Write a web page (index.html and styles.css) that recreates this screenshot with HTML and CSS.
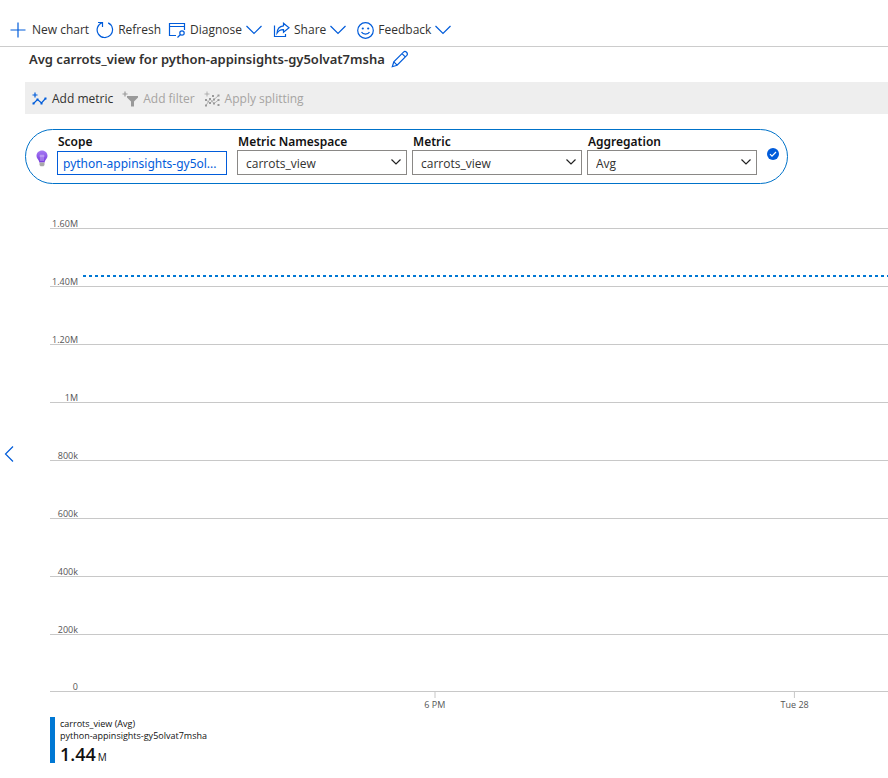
FILE: index.html
```html
<!DOCTYPE html>
<html lang="en">
<head>
<meta charset="utf-8">
<title>Metrics</title>
<link rel="stylesheet" href="styles.css">
</head>
<body>
<header class="toolbar">
  <button class="command new"><svg width="16" height="16" viewBox="0 0 16 16"><path d="M8 0.500v15M0.500 8h15"/></svg>New chart</button>
  <button class="command refresh"><svg width="18" height="18" viewBox="0 0 18 18"><path d="M6.500 1.500A7.700 7.700 0 1 0 12.200 1.900M2 1.500H6.500V6"/></svg>Refresh</button>
  <button class="command menu"><svg width="18" height="16" viewBox="0 0 18 16"><path d="M8 13.500H1.500V1.500H16.500V8M1.500 4.500H16.500M9.500 15.500L12.500 12.500"/><circle cx="14" cy="11" r="2.200"/></svg>Diagnose<svg class="chevron" width="16" height="10" viewBox="0 0 16 10"><path d="M0.500 1L8 8.500L15.500 1"/></svg></button>
  <button class="command menu"><svg width="17" height="16" viewBox="0 0 17 16"><path d="M1.500 3.500V14.500H12.500V12M10.500 1.200L16 5.700L10.500 10.200V7.700C7.500 7.500 5.500 8.800 4 11.200C4.200 7 6.500 4.200 10.500 3.800Z"/></svg>Share<svg class="chevron" width="16" height="10" viewBox="0 0 16 10"><path d="M0.500 1L8 8.500L15.500 1"/></svg></button>
  <button class="command menu"><svg width="17" height="17" viewBox="0 0 17 17"><circle cx="8.500" cy="8.500" r="7.800"/><path d="M4.500 10C6 12.800 11 12.800 12.500 10"/><circle class="solid" cx="5.800" cy="6.500" r="1.100"/><circle class="solid" cx="11.200" cy="6.500" r="1.100"/></svg>Feedback<svg class="chevron" width="16" height="10" viewBox="0 0 16 10"><path d="M0.500 1L8 8.500L15.500 1"/></svg></button>
</header>

<div class="title-row">
  <h1>Avg carrots_view for python-appinsights-gy5olvat7msha</h1>
  <button class="edit" aria-label="Edit title"><svg width="18" height="18" viewBox="0 0 18 18"><path d="M1.300 16.700L2.800 11.800L12.500 2.100C14.500 0.300 17.500 3.300 15.800 5.400L6.100 15.200ZM2.800 11.800L6.100 15.200M11 3.600L14.300 6.900"/></svg></button>
</div>

<nav class="actions">
  <button class="action"><svg class="blue" width="15" height="14" viewBox="0 0 15 14"><path d="M3 0.500V5.500M0.500 3H5.500M1.500 11.500L5.500 7.500L9.500 11L13.500 6.500"/><path class="dots" d="M0.500 10.500h2v2h-2zM4.500 6.500h2v2h-2zM8.500 10.500h2v2h-2zM12.500 5.500h2v2h-2z"/></svg>Add metric</button>
  <button class="action" disabled><svg width="16" height="16" viewBox="0 0 16 16"><path d="M3 0.500V5.500M0.500 3H5.500"/><path class="dots" d="M5 5H16V6.500L12 10.500V15.500H9V10.500L5 6.500Z"/></svg>Add filter</button>
  <button class="action" disabled><svg class="fine" width="16" height="16" viewBox="0 0 16 16"><path d="M3 0.500V5.500M0.500 3H5.500M2 9L6 12L10 8.500L14.500 4.500M2 14.500L6 8L10 12.500L14.500 9"/><path class="dots" d="M1 8h2v2h-2zM5 11h2v2h-2zM5 7h2v2h-2zM9 7.500h2v2h-2zM13.500 3.500h2v2h-2zM1 13.500h2v2h-2zM9 11.500h2v2h-2zM13.500 8h2v2h-2zM13.500 13h2v2h-2zM8 4h2v2h-2z"/></svg>Apply splitting</button>
</nav>

<main class="workspace">
  <aside class="rail"><button aria-label="Expand panel"><svg width="10" height="16" viewBox="0 0 10 16"><path d="M9 0.500L1.500 8L9 15.500"/></svg></button></aside>
  <div class="content">
    <form class="metric">
      <svg class="bulb" width="12" height="17" viewBox="0 0 12 17"><defs><linearGradient id="glow" x1="0" y1="0" x2="0" y2="1"><stop offset="0" stop-color="#a67af4"/><stop offset="1" stop-color="#773adc"/></linearGradient></defs><path fill="url(#glow)" d="M6 0.500C2.800 0.500 0.500 2.800 0.500 5.700C0.500 8.800 3.300 9.500 3.300 12.500H8.700C8.700 9.500 11.500 8.800 11.500 5.700C11.500 2.800 9.200 0.500 6 0.500Z"/><path class="filament" d="M5 11V4.500M7 11V4.500M3.500 6H8.500"/><path fill="#a8a8a8" d="M3.500 12.500h5v2.500l-1 1.200h-3l-1-1.200z"/></svg>
      <div class="field scope"><label for="scope">Scope</label><button type="button" id="scope">python-appinsights-gy5ol...</button></div>
      <div class="field"><label for="ns">Metric Namespace</label><div class="select"><select id="ns"><option>carrots_view</option></select><svg width="10" height="6" viewBox="0 0 10 6"><path d="M0.500 0.500L5 5L9.500 0.500"/></svg></div></div>
      <div class="field"><label for="metric">Metric</label><div class="select"><select id="metric"><option>carrots_view</option></select><svg width="10" height="6" viewBox="0 0 10 6"><path d="M0.500 0.500L5 5L9.500 0.500"/></svg></div></div>
      <div class="field"><label for="agg">Aggregation</label><div class="select"><select id="agg"><option>Avg</option></select><svg width="10" height="6" viewBox="0 0 10 6"><path d="M0.500 0.500L5 5L9.500 0.500"/></svg></div></div>
      <svg class="done" width="12" height="12" viewBox="0 0 12 12"><circle cx="6" cy="6" r="6"/><path d="M3 6.200L5 8.200L9 4"/></svg>
    </form>

    <section class="chart">
      <div class="plot">
        <div class="line"><span>1.60M</span></div>
        <div class="line"><span>1.40M</span></div>
        <div class="line"><span>1.20M</span></div>
        <div class="line"><span>1M</span></div>
        <div class="line"><span>800k</span></div>
        <div class="line"><span>600k</span></div>
        <div class="line"><span>400k</span></div>
        <div class="line"><span>200k</span></div>
        <div class="line"><span>0</span></div>
        <div class="series"></div>
      </div>
      <div class="axis">
        <span class="tick" style="left:43.7%">6 PM</span>
        <span class="tick" style="left:88.4%">Tue 28</span>
      </div>
      <div class="legend">
        <div>carrots_view (Avg)</div>
        <div>python-appinsights-gy5olvat7msha</div>
        <div class="value"><span>1.44</span><small>M</small></div>
      </div>
    </section>
  </div>
</main>
</body>
</html>
```

FILE: styles.css
```css
* { box-sizing: border-box; }

body {
  margin: 0;
  min-height: 100vh;
  display: flex;
  flex-direction: column;
  overflow-x: hidden;
  background: #fff;
  color: #323130;
  font: 12px/16px "Open Sans", "Noto Sans", sans-serif;
}

button {
  padding: 0;
  border: 0;
  background: none;
  color: inherit;
  font: inherit;
  white-space: nowrap;
}

svg {
  flex: none;
  display: block;
  fill: none;
  stroke: #015cda;
  stroke-width: 1.2;
}

.solid { fill: #015cda; stroke: none; }

.toolbar {
  display: flex;
  align-items: center;
  height: 47px;
  padding: 14px 10px 0;
  border-bottom: 1px solid #ccc;
}

.command {
  display: flex;
  align-items: center;
  gap: 4px;
  margin-right: 7px;
}

.new { gap: 6px; }
.menu { margin-right: 11px; }

.title-row {
  display: flex;
  align-items: center;
  gap: 6px;
  height: 35px;
  padding: 0 29px 11px;
}

h1 {
  margin: 0;
  font-family: "Noto Sans", sans-serif;
  font-size: 13px;
  line-height: 18px;
  font-weight: 600;
}

.actions {
  display: flex;
  align-items: center;
  gap: 9px;
  height: 32px;
  margin-left: 25px;
  padding: 2px 7px 0;
  background: #eee;
}

.action {
  display: flex;
  align-items: center;
  gap: 5px;
}

.action:disabled { color: #a6a4a2; }
.action:disabled svg { stroke: #999; }
.action .dots { fill: #999; stroke: none; }
.action .blue .dots { fill: #015cda; }
.fine { stroke-width: 0.7; }

.workspace {
  flex: 1;
  display: grid;
  grid-template-columns: 25px minmax(0, 1fr);
  padding-top: 15px;
}

.rail {
  display: flex;
  align-items: center;
  padding-left: 4px;
}

.metric {
  display: flex;
  gap: 5px;
  width: max-content;
  height: 55px;
  padding: 4px 8px 0 10px;
  border: 1px solid #0072c9;
  border-radius: 28px;
}

.bulb { margin: 16px 4px 0 0; stroke: none; }
.filament { stroke: #d9c4fa; stroke-width: 0.7; }

.field { width: 170px; }
.scope { margin-right: 5px; }

label {
  display: block;
  padding-left: 1px;
  color: #111;
  font-family: "Noto Sans", sans-serif;
  line-height: 16px;
  font-weight: 600;
}

#scope {
  width: 100%;
  height: 24px;
  margin-top: 1px;
  padding: 1px 5px 0;
  border: 1px solid #015cda;
  color: #015cda;
  font-family: "Noto Sans", sans-serif;
  text-align: left;
}

.select { position: relative; }

select {
  appearance: none;
  display: block;
  width: 100%;
  height: 25px;
  padding: 3px 8px 0;
  border: 1px solid #8a8886;
  border-radius: 0;
  background: #fff;
  color: #323130;
  font: inherit;
}

.select svg {
  position: absolute;
  top: 9px;
  right: 6px;
  stroke: #222;
  pointer-events: none;
}

.done { margin: 14px 0 0 5px; fill: #015cda; stroke: none; }
.done path { fill: none; stroke: #fff; }

.chart { padding-left: 25px; color: #555; font-size: 9px; line-height: 12px; }

.plot {
  position: relative;
  display: grid;
  grid-template-rows: 45px repeat(7, 58px) 57px;
}

.line {
  display: flex;
  align-items: flex-end;
  border-bottom: 1px solid #c8c8c8;
}

.line span { width: 28px; margin-bottom: -2px; text-align: right; }

.series {
  position: absolute;
  top: 18%;
  right: 0;
  left: 33px;
  height: 2px;
  background: repeating-linear-gradient(90deg, #0078d4 0 3px, transparent 3px 6px);
}

.axis { position: relative; height: 25px; margin-left: 33px; }

.tick {
  position: absolute;
  display: flex;
  flex-direction: column;
  align-items: center;
  gap: 1px;
  transform: translateX(-50%);
  white-space: nowrap;
}

.tick::before { content: ""; width: 1px; height: 6px; background: #c8c8c8; }

.legend {
  height: 46px;
  padding: 1px 0 0 5px;
  border-left: 5px solid #0078d4;
  color: #111;
}

.value {
  display: flex;
  align-items: baseline;
  gap: 2px;
  font-size: 18px;
  line-height: 25px;
  font-weight: 600;
}

.value small { font-size: 10px; font-weight: 400; }
```
